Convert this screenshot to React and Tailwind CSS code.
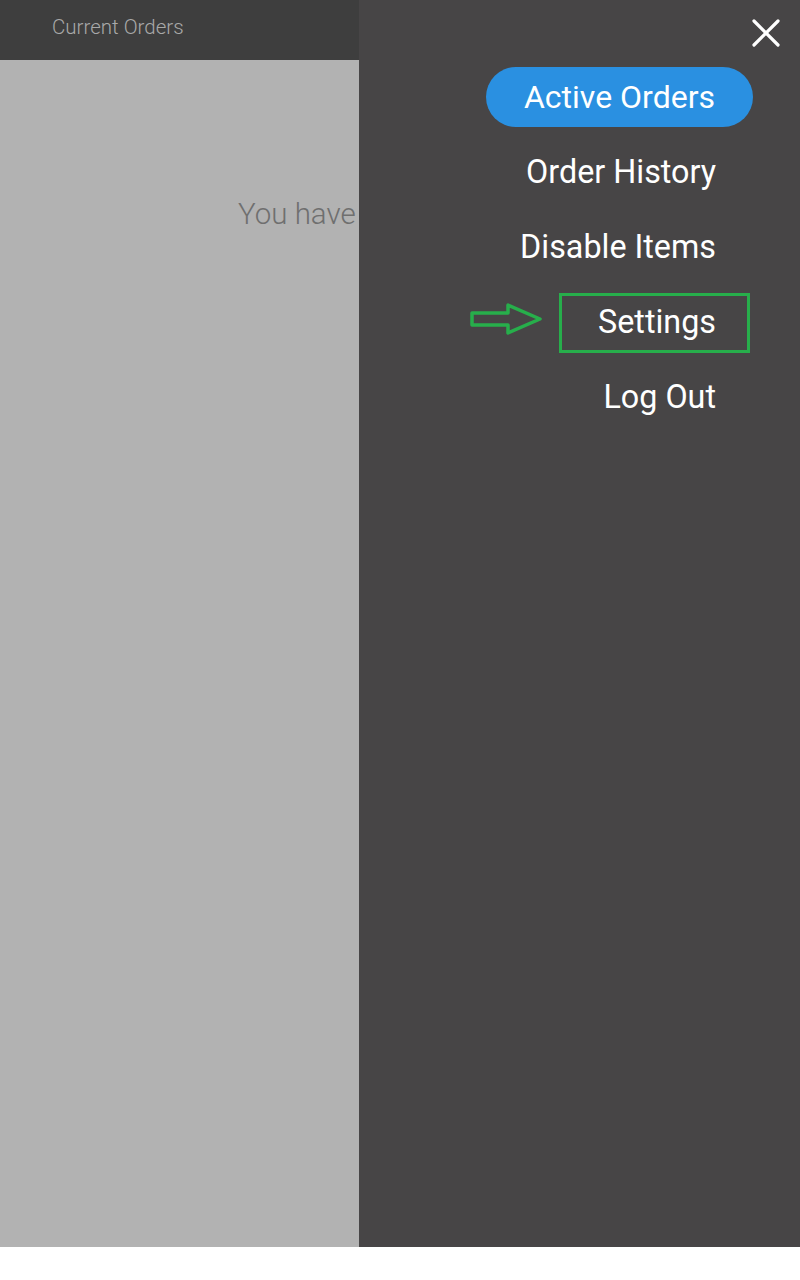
export default function App() {
  const items = ["Order History", "Disable Items", "Settings", "Log Out"];
  return (
    <div className="w-[800px] h-[1280px] bg-white relative overflow-hidden" style={{ fontFamily: "Roboto, 'Noto Sans', sans-serif" }}>
      <div className="flex h-[1247px]">
        <div className="w-[359px] flex flex-col bg-[#b2b2b2]">
          <div className="h-[60px] bg-[#3e3e3e] flex items-center pl-[52px] pb-[6px]">
            <span className="text-[20.5px] text-[#a9a9a9] font-light">Current Orders</span>
          </div>
          <div className="pl-[238px] pt-[132px] whitespace-nowrap overflow-hidden">
            <span className="text-[29.5px] font-light text-[#6f6f6f]">You have</span>
          </div>
        </div>
        <div className="flex-1 bg-[#474546] relative flex flex-col items-end">
          <button className="mt-[19px] mr-[20px] w-[28px] h-[28px] flex items-center justify-center">
            <svg width="28" height="28" viewBox="0 0 28 28" fill="none" stroke="#ffffff" strokeWidth="3.2" strokeLinecap="round">
              <path d="M2 2 L26 26 M26 2 L2 26" />
            </svg>
          </button>
          <div className="mt-[20px] mr-[47px] h-[60px] rounded-full bg-[#2a90e1] flex items-center px-[38px]">
            <span className="text-[32px] text-white leading-none">Active Orders</span>
          </div>
          <div className="flex flex-col items-end mr-[84px] mt-[26px] gap-[37px]">
            {items.map((it) => (
              <span key={it} className="text-[32.3px] text-white leading-[38px]">{it}</span>
            ))}
          </div>
          <div className="absolute left-[200px] top-[293px] w-[191px] h-[60px] border-[3px] border-[#27ae4b]" />
          <svg className="absolute left-[111px] top-[302px]" width="74" height="34" viewBox="0 0 74 34" fill="none">
            <path d="M2 11 L38 11 L38 3 L70 17 L38 31 L38 23 L2 23 Z" stroke="#27ae4b" strokeWidth="3.5" strokeLinejoin="round" />
          </svg>
        </div>
      </div>
    </div>
  );
}
